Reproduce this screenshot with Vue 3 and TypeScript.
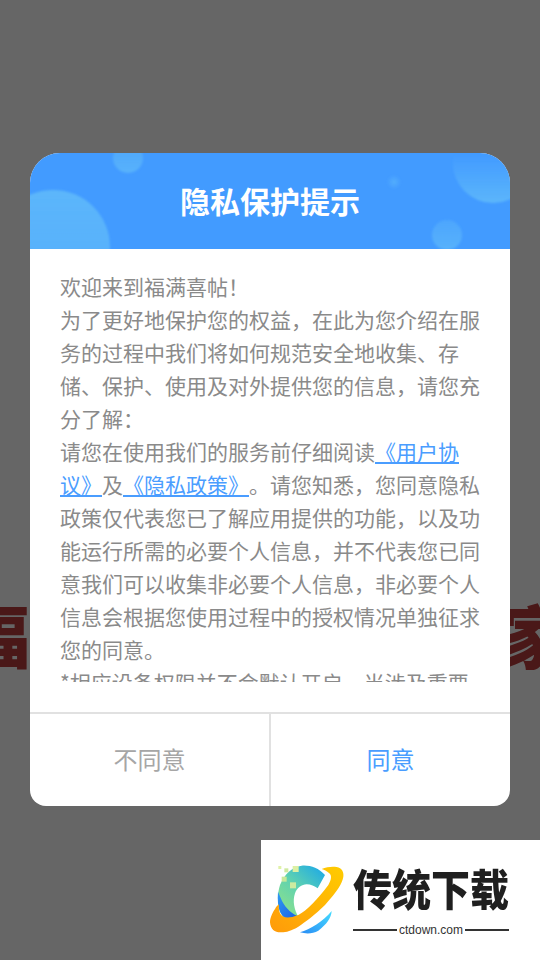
<script setup lang="ts">
const circles = [
  { cx: 98, cy: 5, r: 15, fill: 'url(#fadeTop)' },
  { cx: 23, cy: 94, r: 57, fill: 'url(#fadeDown)' },
  { cx: 463, cy: 10, r: 40, fill: 'url(#fadeUp)' },
  { cx: 364, cy: 29, r: 7, fill: 'url(#fadeCore)' },
  { cx: 417, cy: 82, r: 15, fill: 'url(#fadeSoft)' },
]
const squares = [
  { x: 55, y: 93, s: 9, c: '#e0f2a8' },
  { x: 73, y: 100, s: 12, c: '#cfeaa0' },
  { x: 98, y: 93, s: 18, c: '#dcf0a4' },
  { x: 65, y: 125, s: 15, c: '#c8e89a' },
  { x: 90, y: 142, s: 18, c: '#cdeba0' },
]
</script>

<template>
  <div class="page">
    <div class="headline">
      <span>福</span>
      <span>家</span>
    </div>
    <div class="backdrop"></div>

    <div class="dialog">
      <header class="head">
        <svg class="bubbles" viewBox="0 0 480 96" aria-hidden="true">
          <defs>
            <linearGradient id="fadeDown" x1="0" y1="0" x2="0" y2="1">
              <stop offset="0" stop-color="#5cb6fb" />
              <stop offset="0.5" stop-color="#5cb6fb" stop-opacity="0.85" />
              <stop offset="0.84" stop-color="#5cb6fb" stop-opacity="0.15" />
            </linearGradient>
            <linearGradient id="fadeUp" x1="0" y1="0" x2="0" y2="1">
              <stop offset="0.4" stop-color="#5cb6fb" stop-opacity="0" />
              <stop offset="1" stop-color="#5cb6fb" />
            </linearGradient>
            <linearGradient id="fadeTop" x1="0" y1="0" x2="0" y2="1">
              <stop offset="0.3" stop-color="#5cb6fb" stop-opacity="0.55" />
              <stop offset="1" stop-color="#5cb6fb" stop-opacity="0.85" />
            </linearGradient>
            <linearGradient id="fadeSoft" x1="0" y1="0" x2="0" y2="1">
              <stop offset="0" stop-color="#5cb6fb" stop-opacity="0.4" />
              <stop offset="1" stop-color="#5cb6fb" stop-opacity="0.85" />
            </linearGradient>
            <radialGradient id="fadeCore">
              <stop offset="0" stop-color="#5cb6fb" stop-opacity="0.7" />
              <stop offset="1" stop-color="#5cb6fb" stop-opacity="0" />
            </radialGradient>
            <filter id="soft" x="-30%" y="-30%" width="160%" height="160%">
              <feGaussianBlur stdDeviation="1.2" />
            </filter>
          </defs>
          <circle
            v-for="c in circles"
            :key="c.cx"
            :cx="c.cx"
            :cy="c.cy"
            :r="c.r"
            :fill="c.fill"
            filter="url(#soft)"
          />
        </svg>
        <h1 class="title">隐私保护提示</h1>
      </header>

      <div class="body">
        <div class="scroll">
          <p>欢迎来到福满喜帖！</p>
          <p>为了更好地保护您的权益，在此为您介绍在服务的过程中我们将如何规范安全地收集、存储、保护、使用及对外提供您的信息，请您充分了解：</p>
          <p>请您在使用我们的服务前仔细阅读<a class="link">《用户协议》</a>及<a class="link">《隐私政策》</a>。请您知悉，您同意隐私政策仅代表您已了解应用提供的功能，以及功能运行所需的必要个人信息，并不代表您已同意我们可以收集非必要个人信息，非必要个人信息会根据您使用过程中的授权情况单独征求您的同意。</p>
          <p>*相应设备权限并不会默认开启，当涉及重要</p>
        </div>
      </div>

      <footer class="actions">
        <button class="btn deny">不同意</button>
        <button class="btn agree">同意</button>
      </footer>
    </div>

    <aside class="brand">
      <svg class="mark" viewBox="3 15 375 330" aria-hidden="true">
        <defs>
          <linearGradient id="ring" x1="0.8" y1="0" x2="0.15" y2="0.85">
            <stop offset="0" stop-color="#25aee0" />
            <stop offset="0.5" stop-color="#5fd2b0" />
            <stop offset="1" stop-color="#8ae08e" />
          </linearGradient>
          <linearGradient id="wedge" x1="0" y1="0" x2="1" y2="1">
            <stop offset="0" stop-color="#2f9bf2" />
            <stop offset="1" stop-color="#1a58e0" />
          </linearGradient>
          <linearGradient id="orange" x1="0" y1="1" x2="1" y2="0">
            <stop offset="0" stop-color="#ff9a0a" />
            <stop offset="1" stop-color="#ffcc00" />
          </linearGradient>
          <linearGradient id="crescent" x1="0" y1="1" x2="1" y2="0">
            <stop offset="0" stop-color="#2a8cf5" />
            <stop offset="1" stop-color="#45dcff" />
          </linearGradient>
        </defs>
        <path
          d="M195 120 C175 98 150 90 125 92 C95 95 72 120 60 150 C52 175 52 205 60 230 C68 245 78 254 90 260 L115 245 C103 225 97 198 105 175 C111 158 125 149 140 148 C152 148 164 153 173 160 Z"
          fill="url(#ring)"
        />
        <path
          d="M54 170 C52 195 54 215 60 230 C68 245 78 254 90 262 L118 246 C98 238 78 222 66 198 Z"
          fill="url(#wedge)"
        />
        <path
          d="M185 102 C200 96 215 94 230 96 C246 99 252 112 250 125 C247 145 232 168 195 210 C165 240 135 262 115 275 C95 287 78 292 65 292 C45 293 32 285 30 262 C30 248 38 232 45 222 C48 216 52 212 57 208 C55 222 58 232 62 238 C68 248 85 252 115 240 C140 228 175 190 205 150 C214 135 216 122 208 115 C202 109 194 105 185 102 Z"
          fill="url(#orange)"
        />
        <path d="M120 292 C150 284 190 258 215 228 C214 248 200 268 175 287 C158 297 138 297 120 292 Z" fill="url(#crescent)" />
        <rect
          v-for="q in squares"
          :key="q.x"
          :x="q.x"
          :y="q.y"
          :width="q.s"
          :height="q.s"
          :fill="q.c"
        />
      </svg>
      <div class="brand-text">
        <div class="brand-name">传统下载</div>
        <div class="brand-url">
          <i class="rule"></i>
          <span>ctdown.com</span>
          <i class="rule"></i>
        </div>
      </div>
    </aside>
  </div>
</template>

<style scoped>
.page {
  position: relative;
  width: 540px;
  height: 960px;
  overflow: hidden;
  background: #fff;
  font-family: "Noto Sans CJK SC", "Noto Sans", sans-serif;
  text-spacing-trim: space-all;
}
.headline {
  position: absolute;
  top: 594px;
  left: -38px;
  right: -28px;
  display: flex;
  justify-content: space-between;
  font-size: 68px;
  line-height: 80px;
  font-weight: 900;
  color: #b83c3c;
}
.backdrop {
  position: absolute;
  inset: 0;
  background: rgba(0, 0, 0, 0.6);
}
.dialog {
  position: absolute;
  left: 30px;
  top: 153px;
  width: 480px;
  height: 653px;
  display: flex;
  flex-direction: column;
  overflow: hidden;
  background: #fff;
  border-radius: 30px 30px 16px 16px;
}
.head {
  position: relative;
  flex: 0 0 96px;
  box-sizing: border-box;
  padding-bottom: 3px;
  display: flex;
  align-items: center;
  justify-content: center;
  background: #429bff;
}
.bubbles {
  position: absolute;
  inset: 0;
  width: 100%;
  height: 100%;
}
.title {
  position: relative;
  margin: 0;
  font-size: 30px;
  line-height: 40px;
  font-weight: 700;
  color: #fff;
}
.body {
  flex: 1;
  min-height: 0;
  padding: 21px 30px 30px;
}
.scroll {
  height: 100%;
  overflow: hidden;
  font-size: 21px;
  line-height: 33px;
  color: #8a8a8a;
}
.scroll p {
  margin: 0;
}
.link {
  color: #4a9dff;
  text-decoration: underline;
  text-underline-offset: 2px;
}
.actions {
  flex: 0 0 92px;
  display: flex;
  border-top: 2px solid #e1e1e1;
}
.btn {
  flex: 1;
  padding: 0 0 3px;
  border: 0;
  background: none;
  font: inherit;
  font-size: 24px;
}
.deny {
  color: #a6a6a6;
  border-right: 2px solid #e1e1e1;
}
.agree {
  color: #4a9dff;
}
.brand {
  position: absolute;
  right: 0;
  bottom: 0;
  width: 279px;
  height: 120px;
  display: flex;
  align-items: flex-start;
  background: #fff;
}
.mark {
  flex: 0 0 auto;
  width: 125px;
  height: 110px;
}
.brand-text {
  width: 156px;
  margin-left: -33px;
  padding-top: 24px;
}
.brand-name {
  font-size: 39px;
  line-height: 46px;
  font-weight: 900;
  white-space: nowrap;
  color: #1f1f1f;
  transform: scaleY(1.12);
}
.brand-url {
  display: flex;
  align-items: center;
  gap: 2px;
  margin-top: 10px;
  font-family: "Liberation Sans", sans-serif;
  font-size: 12px;
  line-height: 20px;
  color: #333;
}
.rule {
  flex: 1;
  height: 2px;
  background: #333;
}
</style>
